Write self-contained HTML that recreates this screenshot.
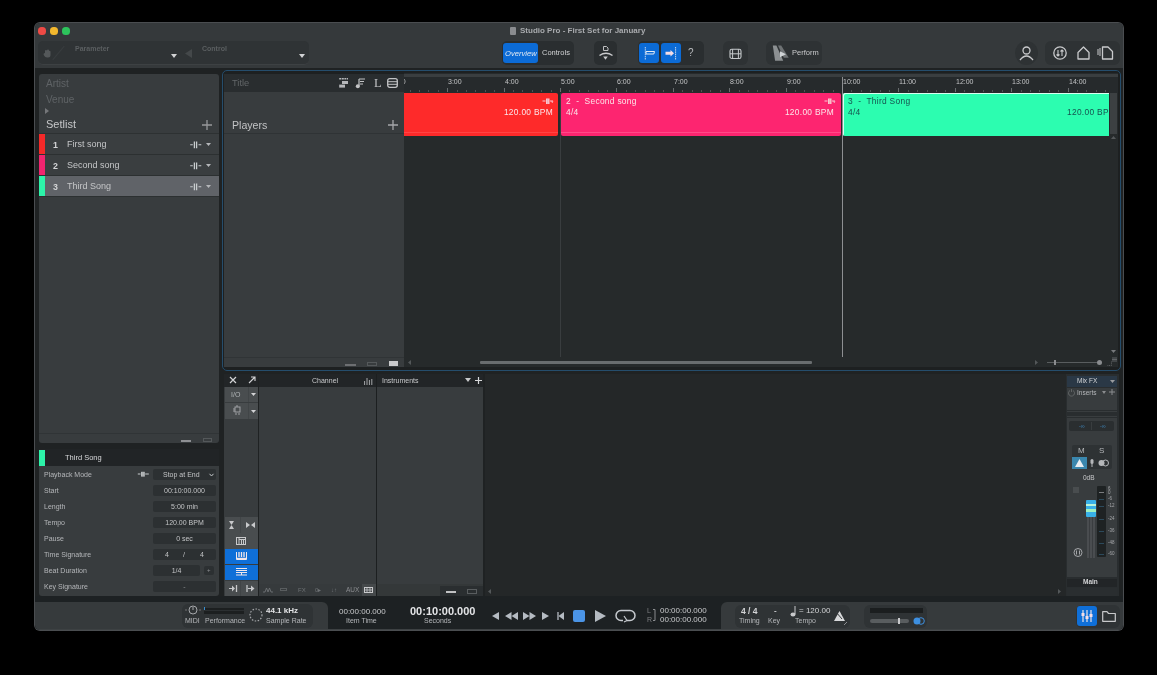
<!DOCTYPE html>
<html><head><meta charset="utf-8">
<style>
*{box-sizing:border-box;margin:0;padding:0}
html,body{width:1157px;height:675px;overflow:hidden;background:#000;font-family:"Liberation Sans",sans-serif;color:#c8c9cb;position:relative}
.a{position:absolute}
.t{position:absolute;white-space:nowrap;line-height:1;will-change:transform}
svg{position:absolute;overflow:visible}
</style></head><body>
<!-- WINDOW BG -->
<div class="a" style="left:35px;top:23px;width:1088px;height:607px;background:#1f2223;border-radius:5px;box-shadow:0 0 0 1px #4a4d50"></div>
<!-- toolbar bg -->
<div class="a" style="left:35px;top:23px;width:1088px;height:45px;background:#35393b;border-radius:5px 5px 0 0"></div>
<!-- traffic lights -->
<div class="a" style="left:38.4px;top:27.4px;width:7.2px;height:7.2px;border-radius:50%;background:#ee4a45"></div>
<div class="a" style="left:50.4px;top:27.4px;width:7.2px;height:7.2px;border-radius:50%;background:#f3b82e"></div>
<div class="a" style="left:62.4px;top:27.4px;width:7.2px;height:7.2px;border-radius:50%;background:#2dc45c"></div>
<!-- title -->
<div class="a" style="left:510px;top:27px;width:6px;height:8px;background:#8a8c8f;border-radius:1px"></div>
<div class="t" style="left:520px;top:27px;font-size:8px;font-weight:bold;color:#a9abae">Studio Pro - First Set for January</div>

<!-- TOOLBAR -->
<div class="a" style="left:38px;top:41px;width:271px;height:24px;background:#2f3335;border-radius:5px;border-bottom:1px solid #3d4143"></div>
<svg style="left:43px;top:49px" width="9" height="9" viewBox="0 0 9 9"><path d="M2 4 V2 Q2 1 3 1 Q4 1 4 2 V1.5 Q4 .5 5 .5 Q6 .5 6 1.5 V2 Q7 1.5 7.5 2.5 V6 Q7.5 8.5 5 8.5 H4 Q2 8.5 1 6.5 L0.5 5 Q1 4 2 4Z" fill="#54585a"/></svg>
<div class="a" style="left:58px;top:44px;width:1px;height:18px;background:#393d3f;transform:rotate(40deg)"></div>
<div class="t" style="left:75px;top:45px;font-size:7px;font-weight:bold;color:#5b5f61">Parameter</div>
<svg style="left:171px;top:54px" width="6" height="4"><path d="M0 0H6L3 4Z" fill="#d2d3d5"/></svg>
<svg style="left:185px;top:49px" width="7" height="9"><path d="M7 0V9L0 4.5Z" fill="#44484a"/></svg>
<div class="t" style="left:202px;top:45px;font-size:7px;font-weight:bold;color:#5b5f61">Control</div>
<svg style="left:299px;top:54px" width="6" height="4"><path d="M0 0H6L3 4Z" fill="#d2d3d5"/></svg>

<!-- overview/controls -->
<div class="a" style="left:502px;top:41px;width:72px;height:24px;background:#2a2e30;border-radius:5px"></div>
<div class="a" style="left:503px;top:43px;width:35px;height:20px;background:#0c6bd6;border-radius:3px"></div>
<div class="t" style="left:505px;top:49.5px;font-size:7.6px;font-style:italic;color:#e0e8f2;letter-spacing:0px">Overview</div>
<div class="t" style="left:542px;top:49px;font-size:7.5px;color:#d0d1d3">Controls</div>
<!-- scissors-ish button -->
<div class="a" style="left:594px;top:41px;width:23px;height:24px;background:#2a2e30;border-radius:5px"></div>
<svg style="left:597px;top:44px" width="17" height="18" viewBox="0 0 17 18"><path d="M6.5 2.5H9.5L11 4V6.5H6.5Z" fill="none" stroke="#bfc0c2" stroke-width="1"/><path d="M2.5 11.5 Q9 7 15.5 11.5" fill="none" stroke="#c9cacc" stroke-width="1.5"/><path d="M6.2 12.5H10.8L8.5 15.8Z" fill="#c9cacc"/></svg>
<!-- locators group -->
<div class="a" style="left:638px;top:41px;width:66px;height:24px;background:#2a2e30;border-radius:5px"></div>
<div class="a" style="left:639px;top:43px;width:20px;height:20px;background:#0c6bd6;border-radius:3px"></div>
<div class="a" style="left:661px;top:43px;width:20px;height:20px;background:#0c6bd6;border-radius:3px"></div>
<svg style="left:639px;top:43px" width="20" height="20"><path d="M6.3 4V17" stroke="#c5d8f0" stroke-width="1" stroke-dasharray="1.5 0.7"/><path d="M7 8.5H15.5L14.8 11H7Z" fill="none" stroke="#e6ecf5" stroke-width="1"/></svg>
<svg style="left:661px;top:43px" width="20" height="20"><path d="M14.6 4V17" stroke="#c5d8f0" stroke-width="1" stroke-dasharray="1.5 0.7"/><path d="M4.5 8.7H9.5V7L13 10.2L9.5 13.4V11.7H4.5Z" fill="#f3dde6"/></svg>
<div class="t" style="left:688px;top:48px;font-size:10px;color:#b9bbbe">?</div>
<!-- film button -->
<div class="a" style="left:723px;top:41px;width:25px;height:24px;background:#2e3234;border-radius:6px"></div>
<svg style="left:729px;top:48px" width="13" height="12"><rect x="1" y="1.2" width="11" height="9.3" rx="1.8" fill="none" stroke="#c5c9cb" stroke-width="1.1"/><path d="M3.6 1.2V10.5M9.4 1.2V10.5" stroke="#c5c9cb" stroke-width="1"/><path d="M1 5.8H12" stroke="#c5c9cb" stroke-width="1"/></svg>
<!-- perform button -->
<div class="a" style="left:766px;top:41px;width:56px;height:24px;background:#2e3234;border-radius:6px"></div>
<svg style="left:772px;top:45px" width="18" height="17"><path d="M0.8 0.5L4.4 0.5L11.2 15.7L3.1 15.7Z" fill="#8c9092"/><path d="M6 0.5L9.2 0.5L16.7 12.8L11.8 12.8Z" fill="#6e7274"/><path d="M8 6.3L14 9.2L8 12.2Z" fill="#d0d4d6"/></svg>
<div class="t" style="left:792px;top:49px;font-size:7.5px;color:#c9cacc">Perform</div>
<!-- user button -->
<div class="a" style="left:1015px;top:41px;width:23px;height:24px;background:#2e3234;border-radius:50%"></div>
<svg style="left:1019px;top:46px" width="15" height="15" viewBox="0 0 15 15"><circle cx="7.5" cy="4.5" r="3.5" fill="none" stroke="#c9cacc" stroke-width="1.3"/><path d="M1 14 Q7.5 6 14 14" fill="none" stroke="#c9cacc" stroke-width="1.3"/></svg>
<!-- right group -->
<div class="a" style="left:1045px;top:41px;width:75px;height:24px;background:#2e3234;border-radius:6px"></div>
<svg style="left:1053px;top:46px" width="14" height="14"><circle cx="7" cy="7" r="6.2" fill="none" stroke="#c9cacc" stroke-width="1.3"/><path d="M5 4V10M3.5 8.5L5 10L6.5 8.5M9 10V4M7.5 5.5L9 4L10.5 5.5" fill="none" stroke="#c9cacc" stroke-width="1.1"/></svg>
<svg style="left:1077px;top:46px" width="13" height="14"><path d="M1 6.5 L6.5 1 L12 6.5 V13 H1Z" fill="none" stroke="#c9cacc" stroke-width="1.3" stroke-linejoin="round"/></svg>
<svg style="left:1097px;top:46px" width="17" height="14"><path d="M1 3V9M3 2V10" stroke="#c9cacc" stroke-width="1"/><path d="M5.5 1H11L15.5 5.5V13H5.5Z" fill="none" stroke="#c9cacc" stroke-width="1.3" stroke-linejoin="round"/></svg>

<!-- LEFT SETLIST PANEL -->
<div class="a" style="left:39px;top:74px;width:180px;height:369px;background:#383c3e;border-radius:3px"></div>
<div class="t" style="left:46px;top:79px;font-size:10px;color:#5f6366">Artist</div>
<div class="t" style="left:46px;top:94.5px;font-size:10px;color:#5f6366">Venue</div>
<svg style="left:45px;top:108px" width="4" height="6"><path d="M0 0V6L4 3Z" fill="#75777a"/></svg>
<div class="t" style="left:46px;top:119px;font-size:11px;color:#c6c7c9">Setlist</div>
<svg style="left:202px;top:120px" width="10" height="10"><path d="M5 0V10M0 5H10" stroke="#96989b" stroke-width="1.3"/></svg>
<div class="a" style="left:39px;top:133px;width:180px;height:1px;background:#2d3132"></div>
<!-- rows -->
<div class="a" style="left:39px;top:134px;width:180px;height:20px;background:#3a3e40"></div>
<div class="a" style="left:39px;top:154px;width:180px;height:1px;background:#2c3031"></div>
<div class="a" style="left:39px;top:155px;width:180px;height:20px;background:#3a3e40"></div>
<div class="a" style="left:39px;top:175px;width:180px;height:1px;background:#2c3031"></div>
<div class="a" style="left:39px;top:176px;width:180px;height:20px;background:#606368"></div>
<div class="a" style="left:39px;top:196px;width:180px;height:1px;background:#2c3031"></div>
<div class="a" style="left:39px;top:134px;width:6px;height:20px;background:#f52929"></div>
<div class="a" style="left:39px;top:155px;width:6px;height:20px;background:#f1246f"></div>
<div class="a" style="left:39px;top:176px;width:6px;height:20px;background:#2df3a9"></div>
<div class="t" style="left:53px;top:140.5px;font-size:8.8px;font-weight:bold;color:#d3d4d6">1</div>
<div class="t" style="left:53px;top:161.5px;font-size:8.8px;font-weight:bold;color:#d3d4d6">2</div>
<div class="t" style="left:53px;top:182.5px;font-size:8.8px;font-weight:bold;color:#d3d4d6">3</div>
<div class="t" style="left:67px;top:140px;font-size:9px;color:#c5c6c8">First song</div>
<div class="t" style="left:67px;top:161px;font-size:9px;color:#c5c6c8">Second song</div>
<div class="t" style="left:67px;top:182px;font-size:9px;color:#c5c6c8">Third Song</div>
<svg style="left:190px;top:140.5px" width="12" height="8"><path d="M0.2 3.8H2.8M8.5 3.8H11.3" stroke="#c8ccce" stroke-width="1.1"/><path d="M4.4 0.4V7.2M6.6 0.4V7.2" stroke="#c8ccce" stroke-width="1.3"/></svg>
<svg style="left:190px;top:161.5px" width="12" height="8"><path d="M0.2 3.8H2.8M8.5 3.8H11.3" stroke="#c8ccce" stroke-width="1.1"/><path d="M4.4 0.4V7.2M6.6 0.4V7.2" stroke="#c8ccce" stroke-width="1.3"/></svg>
<svg style="left:190px;top:182.5px" width="12" height="8"><path d="M0.2 3.8H2.8M8.5 3.8H11.3" stroke="#c8ccce" stroke-width="1.1"/><path d="M4.4 0.4V7.2M6.6 0.4V7.2" stroke="#c8ccce" stroke-width="1.3"/></svg>
<svg style="left:206px;top:143px" width="5" height="3"><path d="M0 0H5L2.5 3Z" fill="#b5b7ba"/></svg>
<svg style="left:206px;top:164px" width="5" height="3"><path d="M0 0H5L2.5 3Z" fill="#b5b7ba"/></svg>
<svg style="left:206px;top:185px" width="5" height="3"><path d="M0 0H5L2.5 3Z" fill="#b5b7ba"/></svg>
<!-- setlist bottom bar -->
<div class="a" style="left:39px;top:433px;width:180px;height:1px;background:#303436"></div>
<div class="a" style="left:181px;top:440px;width:10px;height:2px;background:#8e9093"></div>
<div class="a" style="left:203px;top:438px;width:9px;height:4px;border:1px solid #54585a"></div>

<!-- INSPECTOR -->
<div class="a" style="left:39px;top:449px;width:180px;height:147px;background:#383c3e;border-radius:3px"></div>
<div class="a" style="left:39px;top:449px;width:180px;height:17px;background:#212426"></div>
<div class="a" style="left:39px;top:450px;width:6px;height:16px;background:#2df3a9"></div>
<div class="t" style="left:65px;top:454px;font-size:7.5px;color:#d6d7d9">Third Song</div>
<div class="t" style="left:44px;top:471px;font-size:7px;color:#b5b7ba">Playback Mode</div>
<div class="t" style="left:44px;top:487px;font-size:7px;color:#b5b7ba">Start</div>
<div class="t" style="left:44px;top:503px;font-size:7px;color:#b5b7ba">Length</div>
<div class="t" style="left:44px;top:519px;font-size:7px;color:#b5b7ba">Tempo</div>
<div class="t" style="left:44px;top:535px;font-size:7px;color:#b5b7ba">Pause</div>
<div class="t" style="left:44px;top:551px;font-size:7px;color:#b5b7ba">Time Signature</div>
<div class="t" style="left:44px;top:567px;font-size:7px;color:#b5b7ba">Beat Duration</div>
<div class="t" style="left:44px;top:583px;font-size:7px;color:#b5b7ba">Key Signature</div>
<svg style="left:137px;top:471px" width="13" height="7"><path d="M0.8 3H3.5M8.2 3H11.8" stroke="#c8ccce" stroke-width="1.1"/><rect x="4" y="0.8" width="3.8" height="4.8" fill="#b8bcbe"/><path d="M5.9 0.8V5.6" stroke="#8a8e90" stroke-width="0.5"/></svg>
<div class="a" style="left:153px;top:469px;width:63px;height:11px;background:#2c3032;border-radius:2px"></div>
<div class="t" style="left:163px;top:471px;font-size:7px;color:#c3c4c6">Stop at End</div>
<svg style="left:209px;top:472.5px" width="5" height="4"><path d="M0.5 0.8L2.5 3L4.5 0.8" fill="none" stroke="#c3c7c9" stroke-width="1"/></svg>
<div class="a" style="left:153px;top:485px;width:63px;height:11px;background:#2c3032;border-radius:2px"></div>
<div class="t" style="left:153px;top:487px;width:63px;text-align:center;font-size:7px;color:#c3c4c6">00:10:00.000</div>
<div class="a" style="left:153px;top:501px;width:63px;height:11px;background:#2c3032;border-radius:2px"></div>
<div class="t" style="left:153px;top:503px;width:63px;text-align:center;font-size:7px;color:#c3c4c6">5:00 min</div>
<div class="a" style="left:153px;top:517px;width:63px;height:11px;background:#2c3032;border-radius:2px"></div>
<div class="t" style="left:153px;top:519px;width:63px;text-align:center;font-size:7px;color:#c3c4c6">120.00 BPM</div>
<div class="a" style="left:153px;top:533px;width:63px;height:11px;background:#2c3032;border-radius:2px"></div>
<div class="t" style="left:153px;top:535px;width:63px;text-align:center;font-size:7px;color:#c3c4c6">0 sec</div>
<div class="a" style="left:153px;top:549px;width:63px;height:11px;background:#2c3032;border-radius:2px"></div>
<div class="t" style="left:165px;top:551px;font-size:7px;color:#c3c4c6">4</div>
<div class="t" style="left:183px;top:551px;font-size:7px;color:#c3c4c6">/</div>
<div class="t" style="left:200px;top:551px;font-size:7px;color:#c3c4c6">4</div>
<div class="a" style="left:153px;top:565px;width:47px;height:11px;background:#2c3032;border-radius:2px"></div>
<div class="t" style="left:153px;top:567px;width:47px;text-align:center;font-size:7px;color:#c3c4c6">1/4</div>
<div class="a" style="left:204px;top:566px;width:10px;height:9px;background:#2c3032;border-radius:2px"></div>
<div class="t" style="left:207px;top:567px;font-size:6px;color:#8e9093">+</div>
<div class="a" style="left:153px;top:581px;width:63px;height:11px;background:#2c3032;border-radius:2px"></div>
<div class="t" style="left:153px;top:583px;width:63px;text-align:center;font-size:7px;color:#8e9093">-</div>

<!-- ARRANGEMENT -->
<div class="a" style="left:222px;top:70px;width:899px;height:301px;border:1px solid #254d6c;border-radius:5px;background:#1d2021"></div>
<!-- track header column -->
<div class="a" style="left:224px;top:74px;width:180px;height:18px;background:#292d2f"></div>
<div class="a" style="left:224px;top:92px;width:180px;height:275px;background:#383c3e"></div>
<div class="t" style="left:232px;top:79px;font-size:9.3px;color:#626668">Title</div>
<svg style="left:339px;top:78px" width="10" height="10"><path d="M0.2 0.8H9" stroke="#b5b7ba" stroke-width="1.4" stroke-dasharray="2 0.6"/><rect x="3" y="3" width="6" height="3" fill="#b5b7ba"/><rect x="0.2" y="6.6" width="5.8" height="3" fill="#b5b7ba"/></svg>
<svg style="left:355px;top:78px" width="11" height="11"><path d="M4 1V8" stroke="#c2c3c5" stroke-width="1.2"/><circle cx="2.8" cy="8.3" r="2" fill="#c2c3c5"/><path d="M4 1H10M5 3.5H9M5 6H8" stroke="#c2c3c5" stroke-width="1"/></svg>
<div class="t" style="left:373.5px;top:76.5px;font-size:12.5px;font-family:'Liberation Serif',serif;color:#c2c3c5">L</div>
<svg style="left:387px;top:78px" width="11" height="10"><rect x="0.7" y="0.7" width="9.6" height="8.6" rx="2" fill="none" stroke="#c2c3c5" stroke-width="1.3"/><path d="M0.7 3.7H10.3M0.7 6.3H10.3" stroke="#c2c3c5" stroke-width="1"/></svg>
<div class="t" style="left:231.5px;top:119.5px;font-size:10.6px;color:#c2c3c5">Players</div>
<svg style="left:388px;top:120px" width="10" height="10"><path d="M5 0V10M0 5H10" stroke="#a5a7aa" stroke-width="1.3"/></svg>
<div class="a" style="left:224px;top:133px;width:180px;height:1px;background:#2f3335"></div>
<div class="a" style="left:224px;top:357px;width:180px;height:1px;background:#303436"></div>
<div class="a" style="left:345px;top:364px;width:11px;height:2px;background:#6d6f72"></div>
<div class="a" style="left:367px;top:362px;width:10px;height:4px;border:1px solid #55595b"></div>
<div class="a" style="left:389px;top:361px;width:9px;height:5px;background:#c9cacc"></div>

<!-- ruler -->
<div class="a" style="left:404px;top:73px;width:714px;height:20px;background:#262a2c"></div>
<div class="a" style="left:404px;top:74px;width:714px;height:3px;background:#3a3e40"></div>
<div class="a" style="left:404px;top:73px;width:705px;height:20px;overflow:hidden"><div class="a" style="left:-404px;top:-73px;width:1157px;height:100px"><div class="a" style="left:409.6px;top:90px;width:1px;height:2px;background:#4f5355"></div><div class="a" style="left:419.0px;top:90px;width:1px;height:2px;background:#4f5355"></div><div class="a" style="left:428.4px;top:90px;width:1px;height:2px;background:#4f5355"></div><div class="a" style="left:437.8px;top:90px;width:1px;height:2px;background:#4f5355"></div><div class="a" style="left:447.2px;top:88px;width:1px;height:4px;background:#696d6f"></div><div class="a" style="left:456.6px;top:90px;width:1px;height:2px;background:#4f5355"></div><div class="a" style="left:466.0px;top:90px;width:1px;height:2px;background:#4f5355"></div><div class="a" style="left:475.4px;top:90px;width:1px;height:2px;background:#4f5355"></div><div class="a" style="left:484.8px;top:90px;width:1px;height:2px;background:#4f5355"></div><div class="a" style="left:494.2px;top:90px;width:1px;height:2px;background:#4f5355"></div><div class="a" style="left:503.6px;top:88px;width:1px;height:4px;background:#696d6f"></div><div class="a" style="left:513.0px;top:90px;width:1px;height:2px;background:#4f5355"></div><div class="a" style="left:522.4px;top:90px;width:1px;height:2px;background:#4f5355"></div><div class="a" style="left:531.8px;top:90px;width:1px;height:2px;background:#4f5355"></div><div class="a" style="left:541.2px;top:90px;width:1px;height:2px;background:#4f5355"></div><div class="a" style="left:550.6px;top:90px;width:1px;height:2px;background:#4f5355"></div><div class="a" style="left:560.0px;top:88px;width:1px;height:4px;background:#696d6f"></div><div class="a" style="left:569.4px;top:90px;width:1px;height:2px;background:#4f5355"></div><div class="a" style="left:578.8px;top:90px;width:1px;height:2px;background:#4f5355"></div><div class="a" style="left:588.2px;top:90px;width:1px;height:2px;background:#4f5355"></div><div class="a" style="left:597.6px;top:90px;width:1px;height:2px;background:#4f5355"></div><div class="a" style="left:607.0px;top:90px;width:1px;height:2px;background:#4f5355"></div><div class="a" style="left:616.4px;top:88px;width:1px;height:4px;background:#696d6f"></div><div class="a" style="left:625.8px;top:90px;width:1px;height:2px;background:#4f5355"></div><div class="a" style="left:635.2px;top:90px;width:1px;height:2px;background:#4f5355"></div><div class="a" style="left:644.6px;top:90px;width:1px;height:2px;background:#4f5355"></div><div class="a" style="left:654.0px;top:90px;width:1px;height:2px;background:#4f5355"></div><div class="a" style="left:663.4px;top:90px;width:1px;height:2px;background:#4f5355"></div><div class="a" style="left:672.8px;top:88px;width:1px;height:4px;background:#696d6f"></div><div class="a" style="left:682.2px;top:90px;width:1px;height:2px;background:#4f5355"></div><div class="a" style="left:691.6px;top:90px;width:1px;height:2px;background:#4f5355"></div><div class="a" style="left:701.0px;top:90px;width:1px;height:2px;background:#4f5355"></div><div class="a" style="left:710.4px;top:90px;width:1px;height:2px;background:#4f5355"></div><div class="a" style="left:719.8px;top:90px;width:1px;height:2px;background:#4f5355"></div><div class="a" style="left:729.2px;top:88px;width:1px;height:4px;background:#696d6f"></div><div class="a" style="left:738.6px;top:90px;width:1px;height:2px;background:#4f5355"></div><div class="a" style="left:748.0px;top:90px;width:1px;height:2px;background:#4f5355"></div><div class="a" style="left:757.4px;top:90px;width:1px;height:2px;background:#4f5355"></div><div class="a" style="left:766.8px;top:90px;width:1px;height:2px;background:#4f5355"></div><div class="a" style="left:776.2px;top:90px;width:1px;height:2px;background:#4f5355"></div><div class="a" style="left:785.6px;top:88px;width:1px;height:4px;background:#696d6f"></div><div class="a" style="left:795.0px;top:90px;width:1px;height:2px;background:#4f5355"></div><div class="a" style="left:804.4px;top:90px;width:1px;height:2px;background:#4f5355"></div><div class="a" style="left:813.8px;top:90px;width:1px;height:2px;background:#4f5355"></div><div class="a" style="left:823.2px;top:90px;width:1px;height:2px;background:#4f5355"></div><div class="a" style="left:832.6px;top:90px;width:1px;height:2px;background:#4f5355"></div><div class="a" style="left:842.0px;top:88px;width:1px;height:4px;background:#696d6f"></div><div class="a" style="left:851.4px;top:90px;width:1px;height:2px;background:#4f5355"></div><div class="a" style="left:860.8px;top:90px;width:1px;height:2px;background:#4f5355"></div><div class="a" style="left:870.2px;top:90px;width:1px;height:2px;background:#4f5355"></div><div class="a" style="left:879.6px;top:90px;width:1px;height:2px;background:#4f5355"></div><div class="a" style="left:889.0px;top:90px;width:1px;height:2px;background:#4f5355"></div><div class="a" style="left:898.4px;top:88px;width:1px;height:4px;background:#696d6f"></div><div class="a" style="left:907.8px;top:90px;width:1px;height:2px;background:#4f5355"></div><div class="a" style="left:917.2px;top:90px;width:1px;height:2px;background:#4f5355"></div><div class="a" style="left:926.6px;top:90px;width:1px;height:2px;background:#4f5355"></div><div class="a" style="left:936.0px;top:90px;width:1px;height:2px;background:#4f5355"></div><div class="a" style="left:945.4px;top:90px;width:1px;height:2px;background:#4f5355"></div><div class="a" style="left:954.8px;top:88px;width:1px;height:4px;background:#696d6f"></div><div class="a" style="left:964.2px;top:90px;width:1px;height:2px;background:#4f5355"></div><div class="a" style="left:973.6px;top:90px;width:1px;height:2px;background:#4f5355"></div><div class="a" style="left:983.0px;top:90px;width:1px;height:2px;background:#4f5355"></div><div class="a" style="left:992.4px;top:90px;width:1px;height:2px;background:#4f5355"></div><div class="a" style="left:1001.8px;top:90px;width:1px;height:2px;background:#4f5355"></div><div class="a" style="left:1011.2px;top:88px;width:1px;height:4px;background:#696d6f"></div><div class="a" style="left:1020.6px;top:90px;width:1px;height:2px;background:#4f5355"></div><div class="a" style="left:1030.0px;top:90px;width:1px;height:2px;background:#4f5355"></div><div class="a" style="left:1039.4px;top:90px;width:1px;height:2px;background:#4f5355"></div><div class="a" style="left:1048.8px;top:90px;width:1px;height:2px;background:#4f5355"></div><div class="a" style="left:1058.2px;top:90px;width:1px;height:2px;background:#4f5355"></div><div class="a" style="left:1067.6px;top:88px;width:1px;height:4px;background:#696d6f"></div><div class="a" style="left:1077.0px;top:90px;width:1px;height:2px;background:#4f5355"></div><div class="a" style="left:1086.4px;top:90px;width:1px;height:2px;background:#4f5355"></div><div class="a" style="left:1095.8px;top:90px;width:1px;height:2px;background:#4f5355"></div><div class="a" style="left:1105.2px;top:90px;width:1px;height:2px;background:#4f5355"></div><div class="t" style="left:391.8px;top:78px;font-size:7px;color:#c3c4c6">2:00</div><div class="t" style="left:448.2px;top:78px;font-size:7px;color:#c3c4c6">3:00</div><div class="t" style="left:504.6px;top:78px;font-size:7px;color:#c3c4c6">4:00</div><div class="t" style="left:561.0px;top:78px;font-size:7px;color:#c3c4c6">5:00</div><div class="t" style="left:617.4px;top:78px;font-size:7px;color:#c3c4c6">6:00</div><div class="t" style="left:673.8px;top:78px;font-size:7px;color:#c3c4c6">7:00</div><div class="t" style="left:730.2px;top:78px;font-size:7px;color:#c3c4c6">8:00</div><div class="t" style="left:786.6px;top:78px;font-size:7px;color:#c3c4c6">9:00</div><div class="t" style="left:843.0px;top:78px;font-size:7px;color:#c3c4c6">10:00</div><div class="t" style="left:899.4px;top:78px;font-size:7px;color:#c3c4c6">11:00</div><div class="t" style="left:955.8px;top:78px;font-size:7px;color:#c3c4c6">12:00</div><div class="t" style="left:1012.2px;top:78px;font-size:7px;color:#c3c4c6">13:00</div><div class="t" style="left:1068.6px;top:78px;font-size:7px;color:#c3c4c6">14:00</div></div></div>
<!-- timeline -->
<div class="a" style="left:404px;top:93px;width:705px;height:264px;background:#262a2b"></div>
<div class="a" style="left:404px;top:357px;width:714px;height:10px;background:#262a2b"></div>
<!-- grid lines -->
<div class="a" style="left:560px;top:93px;width:1px;height:264px;background:#393d3f"></div>

<!-- blocks -->
<div class="a" style="left:404px;top:93px;width:154px;height:43px;background:#fe2a2a;border-radius:0 2px 2px 0"></div>
<div class="a" style="left:561px;top:93px;width:280px;height:43px;background:#fd2570;border-radius:2px"></div>
<div class="a" style="left:843px;top:93px;width:266px;height:43px;background:#2cfdb0;border-radius:2px 0 0 2px;box-shadow:inset 1px 1px 0 #d8fff0"></div>
<div class="a" style="left:404px;top:132px;width:154px;height:1px;background:#ff4444"></div>
<div class="a" style="left:561px;top:132px;width:280px;height:1px;background:#ff4a88"></div>
<svg style="left:542px;top:98px" width="12" height="7"><path d="M0.5 3H3.5M8 3H11" stroke="#f7c9d2" stroke-width="1"/><rect x="4" y="0.5" width="3.5" height="5.5" fill="#f7c9d2"/><path d="M5.75 0.5V6" stroke="#f58a9a" stroke-width="0.6"/><path d="M9 3.5H11.5L10.25 5Z" fill="#f7c9d2"/></svg>
<div class="t" style="left:470px;top:108px;width:83px;text-align:right;font-size:8.4px;letter-spacing:.3px;color:#fbe5e8">120.00 BPM</div>
<div class="t" style="left:566px;top:97px;font-size:8.4px;letter-spacing:.3px;color:#fbe5e8;white-space:pre">2  -  Second song</div>
<div class="t" style="left:566px;top:108px;font-size:8.4px;letter-spacing:.3px;color:#fbe5e8">4/4</div>
<svg style="left:824px;top:98px" width="12" height="7"><path d="M0.5 3H3.5M8 3H11" stroke="#f7c9d2" stroke-width="1"/><rect x="4" y="0.5" width="3.5" height="5.5" fill="#f7c9d2"/><path d="M5.75 0.5V6" stroke="#f58a9a" stroke-width="0.6"/><path d="M9 3.5H11.5L10.25 5Z" fill="#f7c9d2"/></svg>
<div class="t" style="left:750px;top:108px;width:84px;text-align:right;font-size:8.4px;letter-spacing:.3px;color:#fbe5e8">120.00 BPM</div>
<div class="t" style="left:848px;top:97px;font-size:8.4px;letter-spacing:.3px;color:#17524f;white-space:pre">3  -  Third Song</div>
<div class="t" style="left:848px;top:108px;font-size:8.4px;letter-spacing:.3px;color:#17524f">4/4</div>
<div class="a" style="left:1060px;top:106px;width:48px;height:12px;overflow:hidden"><div class="t" style="left:7px;top:2px;font-size:8.4px;letter-spacing:.3px;color:#17524f">120.00 BPM</div></div>
<div class="a" style="left:842px;top:77px;width:1px;height:280px;background:#8d8f92"></div>
<!-- right scrollbar -->
<div class="a" style="left:1109px;top:93px;width:9px;height:264px;background:#262a2b"></div>
<div class="a" style="left:1110px;top:93px;width:7px;height:41px;background:#3c4042"></div>
<svg style="left:1111px;top:136px" width="5" height="3"><path d="M0 3H5L2.5 0Z" fill="#54585a"/></svg>
<svg style="left:1111px;top:350px" width="5" height="3"><path d="M0 0H5L2.5 3Z" fill="#77797c"/></svg>
<!-- bottom bar -->
<svg style="left:408px;top:360px" width="3" height="5"><path d="M3 0V5L0 2.5Z" fill="#54585a"/></svg>
<div class="a" style="left:480px;top:361px;width:332px;height:3px;background:#696d6f;border-radius:1px"></div>
<svg style="left:1035px;top:360px" width="3" height="5"><path d="M0 0V5L3 2.5Z" fill="#54585a"/></svg>
<div class="a" style="left:1047px;top:362px;width:53px;height:1px;background:#595d5f"></div>
<div class="a" style="left:1054px;top:360px;width:2px;height:5px;background:#8a8c8f"></div>
<div class="a" style="left:1097px;top:360px;width:5px;height:5px;border-radius:50%;background:#8a8c8f"></div>

<svg style="left:1107px;top:361px" width="5" height="5"><path d="M4.5 0.5V4.5H0.5" fill="none" stroke="#6a6c6f" stroke-width="0.8" stroke-dasharray="1 0.8"/></svg>
<svg style="left:1112px;top:357px" width="5" height="5"><path d="M0 1H5M0 2.5H5M0 4H5" stroke="#7a7c7f" stroke-width="0.7"/></svg>
<!-- CONSOLE -->
<div class="a" style="left:224px;top:374px;width:34px;height:222px;background:#383c3e"></div>
<div class="a" style="left:224px;top:374px;width:34px;height:13px;background:#222527"></div>
<svg style="left:230px;top:377px" width="6" height="6"><path d="M0 0L6 6M6 0L0 6" stroke="#d3d4d6" stroke-width="1.2"/></svg>
<svg style="left:249px;top:377px" width="6" height="6"><path d="M0 6L6 0M2 0H6V4" fill="none" stroke="#d3d4d6" stroke-width="1.1"/></svg>
<div class="a" style="left:225px;top:387px;width:33px;height:15px;background:#494d4f"></div>
<div class="a" style="left:248px;top:387px;width:1px;height:15px;background:#414547"></div>
<div class="t" style="left:231px;top:391px;font-size:7px;color:#b0b4b6">I/O</div>
<svg style="left:251px;top:393px" width="5" height="3"><path d="M0 0H5L2.5 3Z" fill="#d3d4d6"/></svg>
<div class="a" style="left:225px;top:403px;width:33px;height:16px;background:#494d4f"></div>
<div class="a" style="left:248px;top:403px;width:1px;height:16px;background:#414547"></div>
<svg style="left:232px;top:405px" width="9" height="10"><rect x="3" y="2" width="5" height="5" fill="none" stroke="#a0a2a5" stroke-width="1"/><path d="M1 4H3M1 6H3M4 8V10M7 8V10M5 0V2" stroke="#a0a2a5" stroke-width="1"/></svg>
<svg style="left:251px;top:410px" width="5" height="3"><path d="M0 0H5L2.5 3Z" fill="#d3d4d6"/></svg>
<!-- bottom buttons -->
<div class="a" style="left:225px;top:517px;width:33px;height:16px;background:#494d4f"></div>
<div class="a" style="left:240px;top:517px;width:1px;height:16px;background:#414547"></div>
<svg style="left:229px;top:521px" width="5" height="8"><path d="M0 0H5L2.5 4ZM0 8H5L2.5 4Z" fill="#c8c9cb"/></svg>
<svg style="left:246px;top:522px" width="9" height="6"><path d="M0 0V6L4 3ZM9 0V6L5 3Z" fill="#c8c9cb"/></svg>
<div class="a" style="left:225px;top:533px;width:33px;height:16px;background:#494d4f"></div>
<svg style="left:236px;top:537px" width="10" height="8"><rect x="0.5" y="0.5" width="9" height="7" fill="none" stroke="#c8c9cb" stroke-width="1"/><path d="M3 0.5V7.5M5.5 2.5V7.5M7.5 2.5V7.5M3 2.5H9.5" stroke="#c8c9cb" stroke-width="1"/></svg>
<div class="a" style="left:225px;top:549px;width:33px;height:15px;background:#0f6fd8"></div>
<div class="a" style="left:225px;top:565px;width:33px;height:15px;background:#0f6fd8"></div>
<svg style="left:236px;top:552px" width="11" height="8"><path d="M0.5 0V7.5H10.5V0" fill="none" stroke="#f1e6ea" stroke-width="1"/><path d="M3 0V5M5.5 0V5M8 0V5" stroke="#f1e6ea" stroke-width="1.3"/><path d="M0.5 6.5H10.5" stroke="#f1e6ea" stroke-width="1.5"/></svg>
<svg style="left:236px;top:568px" width="11" height="8"><path d="M0 0.5H11M0 2.5H11M0 4.5H11M0 7H11" stroke="#f1e6ea" stroke-width="1"/><path d="M5.5 4.5V7" stroke="#f1e6ea" stroke-width="1"/></svg>
<div class="a" style="left:225px;top:581px;width:33px;height:15px;background:#494d4f"></div>
<div class="a" style="left:240px;top:581px;width:1px;height:15px;background:#414547"></div>
<svg style="left:229px;top:585px" width="9" height="7"><path d="M0 3.5H4" stroke="#c8c9cb" stroke-width="1"/><path d="M3 0.5L6 3.5L3 6.5Z" fill="#c8c9cb"/><path d="M7.5 0V7" stroke="#c8c9cb" stroke-width="1.3"/></svg>
<svg style="left:246px;top:585px" width="9" height="7"><path d="M1 0V7" stroke="#c8c9cb" stroke-width="1.3"/><path d="M2 3.5H6" stroke="#c8c9cb" stroke-width="1"/><path d="M5 0.5L8.5 3.5L5 6.5Z" fill="#c8c9cb"/></svg>

<!-- channel -->
<div class="a" style="left:259px;top:374px;width:118px;height:222px;background:#383c3e"></div>
<div class="a" style="left:259px;top:374px;width:118px;height:13px;background:#222527"></div>
<div class="t" style="left:312px;top:377px;font-size:7px;color:#c8c9cb">Channel</div>
<svg style="left:364px;top:377px" width="9" height="8"><path d="M0.6 4V8M3 1V8M5.4 3V8M7.8 2V8" stroke="#a5a7aa" stroke-width="1"/></svg>
<div class="a" style="left:259px;top:584px;width:118px;height:12px;background:#363a3c"></div>
<svg style="left:263px;top:587px" width="10" height="6"><path d="M0 5L2 5L3.5 1L5 5L6.5 1L8 5H10" fill="none" stroke="#6e7275" stroke-width="0.9"/></svg>
<div class="a" style="left:280px;top:588px;width:7px;height:3px;border:1px solid #595d5f"></div>
<div class="t" style="left:298px;top:587px;font-size:6px;color:#6e7275">FX</div>
<div class="t" style="left:315px;top:587px;font-size:6px;color:#6e7275">0&#9656;</div>
<div class="t" style="left:331px;top:587px;font-size:6px;color:#6e7275">&#8595;&#8593;</div>
<div class="t" style="left:346px;top:587px;font-size:6.5px;color:#8b8d90">AUX</div>
<div class="a" style="left:362px;top:584px;width:14px;height:12px;background:#45494b"></div>
<svg style="left:364px;top:587px" width="9" height="6"><rect x="0.5" y="0.5" width="8" height="5" fill="none" stroke="#c8c9cb" stroke-width="1"/><path d="M0.5 3H8.5M3 0.5V5.5M6 0.5V5.5" stroke="#c8c9cb" stroke-width="0.8"/></svg>
<div class="a" style="left:376px;top:374px;width:1px;height:222px;background:#1c1f20"></div>

<!-- instruments -->
<div class="a" style="left:377px;top:374px;width:106px;height:222px;background:#383c3e"></div>
<div class="a" style="left:377px;top:374px;width:106px;height:13px;background:#222527"></div>
<div class="t" style="left:382px;top:377px;font-size:7px;color:#c8c9cb">Instruments</div>
<svg style="left:465px;top:378px" width="6" height="4"><path d="M0 0H6L3 4Z" fill="#c8c9cb"/></svg>
<svg style="left:475px;top:377px" width="7" height="7"><path d="M3.5 0V7M0 3.5H7" stroke="#d8d9db" stroke-width="1.2"/></svg>
<div class="a" style="left:377px;top:584px;width:106px;height:12px;background:#343839"></div>
<div class="a" style="left:440px;top:586px;width:43px;height:10px;background:#2a2e30"></div>
<div class="a" style="left:446px;top:591px;width:10px;height:2px;background:#c0c1c3"></div>
<div class="a" style="left:467px;top:589px;width:10px;height:5px;border:1px solid #595d5f"></div>
<!-- console main -->
<div class="a" style="left:485px;top:374px;width:581px;height:222px;background:#242728"></div>
<svg style="left:488px;top:589px" width="3" height="5"><path d="M3 0V5L0 2.5Z" fill="#54585a"/></svg>
<svg style="left:1058px;top:589px" width="3" height="5"><path d="M0 0V5L3 2.5Z" fill="#54585a"/></svg>

<!-- MIX CHANNEL -->
<div class="a" style="left:1066px;top:374px;width:53px;height:222px;background:#292d2f"></div>
<div class="a" style="left:1067px;top:376px;width:50px;height:11px;background:#2a3846"></div>
<div class="t" style="left:1077px;top:378px;font-size:6.5px;color:#d3d4d6">Mix FX</div>
<svg style="left:1110px;top:380px" width="5" height="3"><path d="M0 0H5L2.5 3Z" fill="#9a9c9f"/></svg>
<div class="a" style="left:1067px;top:388px;width:50px;height:22px;background:#383c3e"></div>
<svg style="left:1068px;top:389px" width="7" height="7"><path d="M2 1.5A3 3 0 1 0 5 1.5M3.5 0V3" fill="none" stroke="#696d6f" stroke-width="0.8"/></svg>
<div class="t" style="left:1077px;top:390px;font-size:6.5px;color:#b5b7ba">Inserts</div>
<svg style="left:1102px;top:391px" width="4" height="3"><path d="M0 0H4L2 3Z" fill="#8a8c8f"/></svg>
<svg style="left:1109px;top:389px" width="6" height="6"><path d="M3 0V6M0 3H6" stroke="#8a8c8f" stroke-width="1"/></svg>
<div class="a" style="left:1067px;top:411px;width:50px;height:1px;background:#393d3f"></div>
<div class="a" style="left:1067px;top:416px;width:50px;height:1px;background:#393d3f"></div>
<div class="a" style="left:1067px;top:418px;width:50px;height:159px;background:#383c3e"></div>
<div class="a" style="left:1069px;top:421px;width:45px;height:10px;background:#2a2e30;border-radius:2px"></div>
<div class="a" style="left:1091px;top:422px;width:1px;height:8px;background:#393d3f"></div>
<div class="t" style="left:1079px;top:424px;font-size:5.5px;color:#3d7fb0">-∞</div>
<div class="t" style="left:1100px;top:424px;font-size:5.5px;color:#3d7fb0">-∞</div>
<div class="a" style="left:1072px;top:445px;width:40px;height:24px;background:#2e3234;border-radius:2px"></div>
<div class="t" style="left:1078px;top:447px;font-size:8px;color:#b5b7ba">M</div>
<div class="t" style="left:1099px;top:447px;font-size:8px;color:#b5b7ba">S</div>
<div class="a" style="left:1072px;top:457px;width:15px;height:12px;background:#3a87ae"></div>
<svg style="left:1075px;top:459px" width="9" height="8"><path d="M4.5 0L9 8H0Z" fill="#e8eef2"/></svg>
<svg style="left:1090px;top:459px" width="4" height="8"><rect x="0.5" y="0" width="3" height="5" rx="1.5" fill="#b5b7ba"/><path d="M2 5V8" stroke="#b5b7ba"/></svg>
<svg style="left:1098px;top:459px" width="11" height="8"><circle cx="3.5" cy="4" r="3" fill="#b5b7ba"/><circle cx="7.5" cy="4" r="3" fill="none" stroke="#b5b7ba" stroke-width="1"/></svg>
<div class="t" style="left:1083px;top:475px;font-size:6.5px;color:#c8c9cb">0dB</div>
<div class="a" style="left:1073px;top:487px;width:6px;height:6px;background:#494d4f"></div>
<div class="a" style="left:1087px;top:517px;width:8px;height:41px;background:#4a4d50"></div>
<div class="a" style="left:1089px;top:517px;width:1px;height:41px;background:#3a3d40"></div>
<div class="a" style="left:1092px;top:517px;width:1px;height:41px;background:#3a3d40"></div>
<div class="a" style="left:1086px;top:500px;width:10px;height:17px;background:#38b0e8;border-radius:1px"></div>
<div class="a" style="left:1086px;top:504px;width:10px;height:2px;background:#b8f4d8"></div>
<div class="a" style="left:1086px;top:509px;width:10px;height:3px;background:#9ef0c0"></div>
<div class="a" style="left:1097px;top:486px;width:9px;height:71px;background:#1e2223;border-radius:1px"></div>
<div class="a" style="left:1099px;top:492px;width:5px;height:1px;background:#7a7c7f"></div>
<div class="t" style="left:1108px;top:487.3px;font-size:4.5px;color:#a5a7aa">6</div><div class="t" style="left:1108px;top:491.3px;font-size:4.5px;color:#a5a7aa">0</div><div class="t" style="left:1108px;top:497.0px;font-size:4.5px;color:#a5a7aa">-6</div><div class="t" style="left:1108px;top:503.7px;font-size:4.5px;color:#a5a7aa">-12</div><div class="t" style="left:1108px;top:517.0px;font-size:4.5px;color:#a5a7aa">-24</div><div class="t" style="left:1108px;top:528.7px;font-size:4.5px;color:#a5a7aa">-36</div><div class="t" style="left:1108px;top:541.0px;font-size:4.5px;color:#a5a7aa">-48</div><div class="t" style="left:1108px;top:551.9px;font-size:4.5px;color:#a5a7aa">-60</div><div class="a" style="left:1099px;top:499px;width:5px;height:1px;background:#2c4a5c"></div><div class="a" style="left:1099px;top:506px;width:5px;height:1px;background:#2c4a5c"></div><div class="a" style="left:1099px;top:519px;width:5px;height:1px;background:#2c4a5c"></div><div class="a" style="left:1099px;top:531px;width:5px;height:1px;background:#2c4a5c"></div><div class="a" style="left:1099px;top:543px;width:5px;height:1px;background:#2c4a5c"></div><div class="a" style="left:1099px;top:554px;width:5px;height:1px;background:#2c4a5c"></div>
<svg style="left:1073px;top:548px" width="10" height="9"><circle cx="5" cy="4.5" r="4" fill="none" stroke="#a5a7aa" stroke-width="1"/><path d="M3.5 2.5V6.5M6.5 2.5V6.5" stroke="#a5a7aa" stroke-width="1"/></svg>
<div class="a" style="left:1067px;top:579px;width:50px;height:8px;background:#222527"></div>
<div class="t" style="left:1083px;top:579px;font-size:6.5px;font-weight:bold;color:#d3d4d6">Main</div>
<div class="a" style="left:1067px;top:588px;width:50px;height:8px;background:#2a2e30"></div>

<!-- TRANSPORT -->
<div class="a" style="left:35px;top:596px;width:1088px;height:34px;background:#1d2123;border-radius:0 0 5px 5px;overflow:hidden">
  <div class="a" style="left:0;top:6px;width:293px;height:28px;background:#363a3c;border-radius:0 6px 0 0"></div>
  <div class="a" style="left:686px;top:6px;width:402px;height:28px;background:#363a3c;border-radius:6px 0 0 0"></div>
  <div class="a" style="left:0;top:33px;width:1089px;height:1px;background:#3d4143"></div>
</div>
<div class="a" style="left:182px;top:604px;width:131px;height:24px;background:#2f3335;border-radius:6px"></div>
<svg style="left:184px;top:605px" width="18" height="10"><circle cx="9" cy="5" r="4" fill="none" stroke="#a5a7aa" stroke-width="1"/><path d="M9 2V5" stroke="#a5a7aa"/><circle cx="2" cy="5" r="0.7" fill="#8a8c8f"/><circle cx="16" cy="5" r="0.7" fill="#8a8c8f"/></svg>
<div class="t" style="left:185px;top:617px;font-size:7px;color:#b5b7ba">MIDI</div>
<div class="a" style="left:204px;top:608px;width:40px;height:6px;background:#1c1f20"></div>
<div class="a" style="left:204px;top:610px;width:40px;height:1px;background:#2b2f31"></div>
<div class="a" style="left:204px;top:607px;width:1px;height:3px;background:#3a8fd0"></div>
<div class="t" style="left:205px;top:617px;font-size:7px;color:#b5b7ba">Performance</div>
<svg style="left:249px;top:608px" width="14" height="14"><circle cx="7" cy="7" r="6" fill="none" stroke="#a5a7aa" stroke-width="1.2" stroke-dasharray="1.5 1.5"/></svg>
<div class="t" style="left:266px;top:607px;font-size:8px;font-weight:bold;color:#e3e4e6">44.1 kHz</div>
<div class="t" style="left:266px;top:617px;font-size:7px;color:#b5b7ba">Sample Rate</div>
<div class="t" style="left:339px;top:608px;font-size:8px;color:#c8c9cb">00:00:00.000</div>
<div class="t" style="left:346px;top:617px;font-size:7px;color:#b5b7ba">Item Time</div>
<div class="t" style="left:410px;top:606px;font-size:11px;font-weight:bold;color:#e3e4e6">00:10:00.000</div>
<div class="t" style="left:424px;top:617px;font-size:7px;color:#b5b7ba">Seconds</div>
<svg style="left:492px;top:612px" width="7" height="8"><path d="M7 0V8L0 4Z" fill="#b5bbc2"/></svg>
<svg style="left:505px;top:612px" width="13" height="8"><path d="M6.5 0V8L0 4ZM13 0V8L6.5 4Z" fill="#b5bbc2"/></svg>
<svg style="left:523px;top:612px" width="13" height="8"><path d="M0 0V8L6.5 4ZM6.5 0V8L13 4Z" fill="#b5bbc2"/></svg>
<svg style="left:542px;top:612px" width="7" height="8"><path d="M0 0V8L7 4Z" fill="#b5bbc2"/></svg>
<svg style="left:557px;top:612px" width="7" height="8"><path d="M1 0V8" stroke="#b5bbc2" stroke-width="1.3"/><path d="M7 0V8L1.5 4Z" fill="#b5bbc2"/></svg>
<div class="a" style="left:573px;top:610px;width:12px;height:12px;background:#4b94e6;border-radius:2px"></div>
<svg style="left:595px;top:610px" width="11" height="12"><path d="M0 0V12L11 6Z" fill="#b5bbc2"/></svg>
<svg style="left:615px;top:609px" width="21" height="13"><path d="M8 11.5H6A5 5 0 0 1 6 1.5H15A5 5 0 0 1 15 11.5H12" fill="none" stroke="#c5c9ce" stroke-width="1.5"/><path d="M9 7L12 11.5L9 13" fill="none" stroke="#c5c9ce" stroke-width="1.2"/></svg>
<div class="t" style="left:647px;top:607px;font-size:7px;color:#7d7f82">L</div>
<div class="t" style="left:647px;top:616px;font-size:7px;color:#7d7f82">R</div>
<svg style="left:653px;top:609px" width="3" height="12"><path d="M0 0.5H2V11.5H0" fill="none" stroke="#8a8c8f" stroke-width="1"/></svg>
<div class="t" style="left:660px;top:607px;font-size:8px;color:#c8c9cb">00:00:00.000</div>
<div class="t" style="left:660px;top:616px;font-size:8px;color:#c8c9cb">00:00:00.000</div>
<div class="a" style="left:735px;top:605px;width:115px;height:23px;background:#2f3335;border-radius:6px"></div>
<div class="t" style="left:741px;top:607px;font-size:8.5px;font-weight:bold;color:#d3d4d6">4 / 4</div>
<div class="t" style="left:739px;top:617px;font-size:7px;color:#b5b7ba">Timing</div>
<div class="t" style="left:774px;top:607px;font-size:8px;font-weight:bold;color:#d3d4d6">-</div>
<div class="t" style="left:768px;top:617px;font-size:7px;color:#b5b7ba">Key</div>
<svg style="left:790px;top:606px" width="6" height="11"><path d="M5 0V8" stroke="#c8c9cb" stroke-width="1"/><ellipse cx="3" cy="8.5" rx="2.5" ry="2" fill="#c8c9cb"/></svg>
<div class="t" style="left:799px;top:607px;font-size:8px;color:#d3d4d6">= 120.00</div>
<div class="t" style="left:795px;top:617px;font-size:7px;color:#b5b7ba">Tempo</div>
<svg style="left:834px;top:611px" width="11" height="10"><path d="M5.5 0L11 10H0Z" fill="#d8d9db"/><path d="M2 1L8 8" stroke="#363a3c" stroke-width="1"/></svg>
<svg style="left:844px;top:622px" width="3" height="3"><path d="M0 3L3 0" stroke="#8a8c8f"/></svg>
<div class="a" style="left:864px;top:605px;width:63px;height:23px;background:#2f3335;border-radius:6px"></div>
<div class="a" style="left:870px;top:608px;width:53px;height:5px;background:#1b1e1f"></div>
<div class="a" style="left:870px;top:619px;width:39px;height:4px;background:#595d5f;border-radius:2px"></div>
<div class="a" style="left:898px;top:618px;width:2px;height:6px;background:#c8c9cb"></div>
<svg style="left:913px;top:617px" width="12" height="8"><circle cx="4" cy="4" r="3.5" fill="#3d8fe0"/><circle cx="8" cy="4" r="3.3" fill="none" stroke="#3d8fe0" stroke-width="1"/></svg>
<div class="a" style="left:1076px;top:605px;width:44px;height:23px;background:#2f3335;border-radius:6px"></div>
<div class="a" style="left:1077px;top:606px;width:20px;height:20px;background:#0f6fd8;border-radius:3px"></div>
<svg style="left:1081px;top:610px" width="12" height="12"><path d="M2 0V12M6 0V12M10 0V12" stroke="#e8e2e6" stroke-width="1.2"/><rect x="0.5" y="3" width="3" height="3" fill="#f5dde5"/><rect x="4.5" y="6" width="3" height="3" fill="#f5dde5"/><rect x="8.5" y="4" width="3" height="3" fill="#f5dde5"/></svg>
<svg style="left:1102px;top:611px" width="14" height="11"><path d="M0.7 0.7H5L6.5 2.5H13.3V10.3H0.7Z" fill="none" stroke="#c8c9cb" stroke-width="1.2" stroke-linejoin="round"/></svg>

</body></html>
